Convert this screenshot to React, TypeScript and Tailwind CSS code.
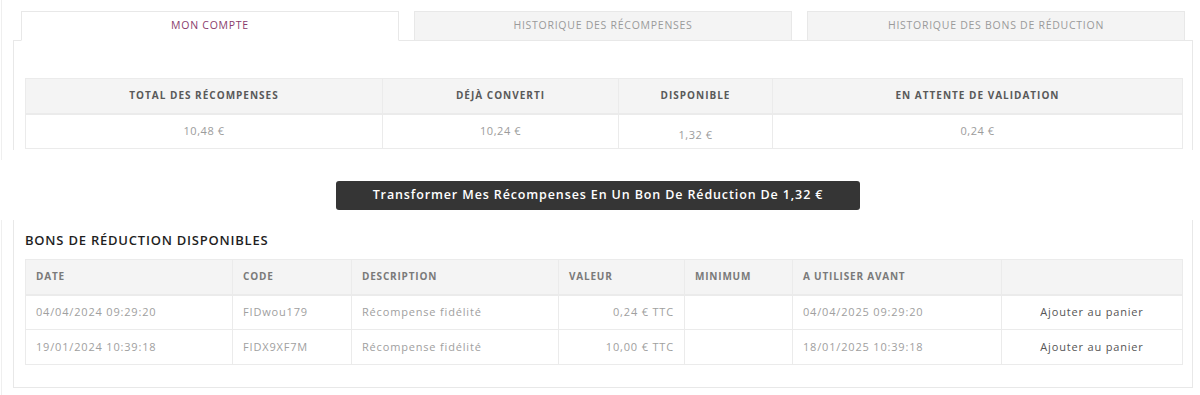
const summary = [
  { label: 'Total des récompenses', value: '10,48 €', w: 'w-[357px]' },
  { label: 'Déjà converti', value: '10,24 €', w: 'w-[236px]' },
  { label: 'Disponible', value: '1,32 €', w: 'w-[154px]', low: true },
  { label: 'En attente de validation', value: '0,24 €', w: 'w-[410px]' },
]

const vouchers = [
  {
    date: '04/04/2024 09:29:20',
    code: 'FIDwou179',
    desc: 'Récompense fidélité',
    value: '0,24 € TTC',
    min: '',
    until: '04/04/2025 09:29:20',
  },
  {
    date: '19/01/2024 10:39:18',
    code: 'FIDX9XF7M',
    desc: 'Récompense fidélité',
    value: '10,00 € TTC',
    min: '',
    until: '18/01/2025 10:39:18',
  },
]

const tabs = ['Mon compte', 'Historique des récompenses', 'Historique des bons de réduction']

export default function App() {
  return (
    <div className="w-[1200px] h-[395px] bg-white overflow-hidden font-['Open_Sans','Liberation_Sans',sans-serif]">
      {/* top block: tabs + summary */}
      <div className="h-[160px] ml-px border-l border-[#efefef] pl-[11px] pr-[7px] pt-[11px]">
        <div className="flex gap-[15px] pl-[8px] relative z-10">
          {tabs.map((t, i) => (
            <div
              key={t}
              className={`w-[378px] h-[30px] flex items-center justify-center text-[10.5px] uppercase tracking-[0.07em] border border-[#e8e8e8] ${
                i === 0 ? 'bg-white border-b-white text-[#8a3c6c]' : 'bg-[#f4f4f4] text-[#9a9a9a]'
              }`}
            >
              {t}
            </div>
          ))}
        </div>
        <div className="-mt-px h-[110px] border-x border-t border-[#e8e8e8] pl-[11px] pr-[10px] pt-[37px]">
          <table className="w-[1157px] border-collapse table-fixed">
            <thead>
              <tr className="bg-[#f4f4f4]">
                {summary.map((c) => (
                  <th
                    key={c.label}
                    className={`${c.w} h-[35px] border border-[#ebebeb] border-b-2 text-[10px] font-bold uppercase tracking-[0.1em] text-[#595959] text-center`}
                  >
                    {c.label}
                  </th>
                ))}
              </tr>
            </thead>
            <tbody>
              <tr>
                {summary.map((c) => (
                  <td
                    key={c.label}
                    className={`h-[35px] border border-[#ebebeb] text-[11px] tracking-[0.05em] text-[#9c9c9c] text-center ${c.low ? 'pt-[8px]' : ''}`}
                  >
                    {c.value}
                  </td>
                ))}
              </tr>
            </tbody>
          </table>
        </div>
      </div>

      {/* convert button */}
      <div className="h-[60px] flex justify-center pt-[21px] pr-[4px]">
        <button className="w-[524px] h-[29px] rounded-[3px] bg-[#353535] text-white text-[12.5px] font-semibold tracking-[0.07em]">
          Transformer Mes Récompenses En Un Bon De Réduction De 1,32 €
        </button>
      </div>

      {/* vouchers block */}
      <div className="h-[175px] ml-px border-l border-[#efefef] pl-[11px] pr-[7px]">
        <div className="h-[168px] border-x border-b border-[#e8e8e8] pl-[11px] pr-[10px] pt-[11px]">
          <h2 className="h-[20px] mb-[8px] flex items-center text-[13px] font-semibold uppercase text-[#1f1f1f] tracking-[0.06em]">
            Bons de réduction disponibles
          </h2>
          <table className="w-[1157px] border-collapse table-fixed">
            <thead>
              <tr className="bg-[#f4f4f4]">
                <th className="w-[207px] h-[35px] border border-[#ebebeb] border-b-2 pl-[10px] text-left text-[10px] font-bold uppercase tracking-[0.08em] text-[#7a7a7a]">Date</th>
                <th className="w-[119px] border border-[#ebebeb] border-b-2 pl-[10px] text-left text-[10px] font-bold uppercase tracking-[0.08em] text-[#7a7a7a]">Code</th>
                <th className="w-[207px] border border-[#ebebeb] border-b-2 pl-[10px] text-left text-[10px] font-bold uppercase tracking-[0.08em] text-[#7a7a7a]">Description</th>
                <th className="w-[126px] border border-[#ebebeb] border-b-2 pl-[10px] text-left text-[10px] font-bold uppercase tracking-[0.08em] text-[#7a7a7a]">Valeur</th>
                <th className="w-[108px] border border-[#ebebeb] border-b-2 pl-[10px] text-left text-[10px] font-bold uppercase tracking-[0.08em] text-[#7a7a7a]">Minimum</th>
                <th className="w-[209px] border border-[#ebebeb] border-b-2 pl-[10px] text-left text-[10px] font-bold uppercase tracking-[0.08em] text-[#7a7a7a]">A utiliser avant</th>
                <th className="w-[181px] border border-[#ebebeb] border-b-2"></th>
              </tr>
            </thead>
            <tbody>
              {vouchers.map((v) => (
                <tr key={v.code} className="text-[11px] text-[#a0a0a0] tracking-[0.075em]">
                  <td className="h-[35px] border border-[#ebebeb] pl-[10px]">{v.date}</td>
                  <td className="border border-[#ebebeb] pl-[10px]">{v.code}</td>
                  <td className="border border-[#ebebeb] pl-[10px]">{v.desc}</td>
                  <td className="border border-[#ebebeb] pr-[10px] text-right">{v.value}</td>
                  <td className="border border-[#ebebeb] pl-[10px]">{v.min}</td>
                  <td className="border border-[#ebebeb] pl-[10px]">{v.until}</td>
                  <td className="border border-[#ebebeb] text-center text-[#555]">Ajouter au panier</td>
                </tr>
              ))}
            </tbody>
          </table>
        </div>
      </div>
    </div>
  )
}
